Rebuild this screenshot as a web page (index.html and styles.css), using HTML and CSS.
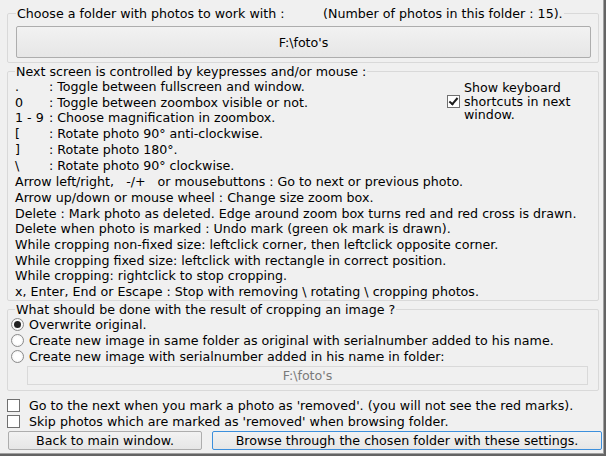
FILE: index.html
```html
<!DOCTYPE html>
<html lang="en">
<head>
  <meta charset="UTF-8" />
  <title>Crop photos</title>
  <link rel="stylesheet" href="styles.css">
</head>
<body>
  <div class="window">
    <fieldset class="group folder">
      <legend><span class="legend-main">Choose a folder with photos to work with :</span><span>(Number of photos in this folder : 15).</span></legend>
      <button class="btn folder-btn">F:\foto's</button>
    </fieldset>

    <fieldset class="group keys">
      <legend>Next screen is controlled by keypresses and/or mouse :</legend>
      <div class="keys-top">
        <div class="shortcuts">
          <div class="line"><span class="key">.</span>: Toggle between fullscreen and window.</div>
          <div class="line"><span class="key">0</span>: Toggle between zoombox visible or not.</div>
          <div class="line"><span class="key">1 - 9</span>: Choose magnification in zoombox.</div>
          <div class="line"><span class="key">[</span>: Rotate photo 90° anti-clockwise.</div>
          <div class="line"><span class="key">]</span>: Rotate photo 180°.</div>
          <div class="line"><span class="key">\</span>: Rotate photo 90° clockwise.</div>
        </div>
        <label class="show-keys">
          <input type="checkbox" class="check" checked>
          <span class="show-text">Show keyboard shortcuts in next window.</span>
        </label>
      </div>
      <div class="more">
        <div class="line">Arrow left/right,   -/+   or mousebuttons : Go to next or previous photo.</div>
        <div class="line">Arrow up/down or mouse wheel : Change size zoom box.</div>
        <div class="line">Delete : Mark photo as deleted. Edge around zoom box turns red and red cross is drawn.</div>
        <div class="line">Delete when photo is marked : Undo mark (green ok mark is drawn).</div>
        <div class="line">While cropping non-fixed size: leftclick corner, then leftclick opposite corner.</div>
        <div class="line">While cropping fixed size: leftclick with rectangle in correct position.</div>
        <div class="line">While cropping: rightclick to stop cropping.</div>
        <div class="line">x, Enter, End or Escape : Stop with removing \ rotating \ cropping photos.</div>
      </div>
    </fieldset>

    <fieldset class="group result">
      <legend>What should be done with the result of cropping an image ?</legend>
      <label class="option"><input type="radio" name="result" class="radio" checked>Overwrite original.</label>
      <label class="option"><input type="radio" name="result" class="radio">Create new image in same folder as original with serialnumber added to his name.</label>
      <label class="option"><input type="radio" name="result" class="radio">Create new image with serialnumber added in his name in folder:</label>
      <div class="target">F:\foto's</div>
    </fieldset>

    <div class="toggles">
      <label class="option plain"><input type="checkbox" class="check">Go to the next when you mark a photo as 'removed'. (you will not see the red marks).</label>
      <label class="option plain"><input type="checkbox" class="check">Skip photos which are marked as 'removed' when browsing folder.</label>
    </div>

    <div class="actions">
      <button class="btn back">Back to main window.</button>
      <button class="btn browse">Browse through the chosen folder with these settings.</button>
    </div>
  </div>
</body>
</html>
```

FILE: styles.css
```css
body {
  margin: 0;
  font-family: "DejaVu Sans", sans-serif;
  font-size: 12.65px;
  color: #000;
}
.window {
  width: 606px;
  height: 456px;
  box-sizing: border-box;
  background: #f0f0f0;
  padding: 6px 0 0 7px;
  box-shadow: inset -2px -2px #646464, inset -3px -3px #a0a0a0;
}
.group {
  width: 592px;
  box-sizing: border-box;
  margin: 0;
  padding: 0;
  border: 1px solid #d9d9d9;
  border-radius: 2px;
}
.group legend {
  padding: 0 1px;
  margin-left: 0;
  height: 15px;
  line-height: 15px;
}
.folder legend {
  display: flex;
}
.legend-main {
  width: 306px;
}
.folder {
  padding: 5px 7px 4px 8px;
}
.btn {
  font: inherit;
  color: #000;
  border: 1px solid #adadad;
  border-radius: 2px;
  background: linear-gradient(#f2f2f2, #e6e6e6);
  padding: 0;
}
.folder-btn {
  width: 575px;
  height: 32px;
  display: block;
}
.keys {
  margin-top: 1px;
  padding: 0 0 0 7px;
}
.line {
  line-height: 15.7px;
  white-space: pre;
}
.key {
  display: inline-block;
  min-width: 34px;
}
.keys-top {
  display: flex;
  align-items: flex-start;
}
.shortcuts {
  width: 432px;
}
.more {
  margin-top: 1px;
}
.show-keys {
  display: flex;
  align-items: center;
  gap: 4px;
  line-height: 13.5px;
  margin-top: 2px;
}
.show-text {
  width: 120px;
}
.check {
  appearance: none;
  width: 13px;
  height: 13px;
  margin: 0;
  flex: none;
  border: 1px solid #707070;
  background: #fff;
  box-sizing: border-box;
  position: relative;
}
.check:checked::after {
  content: "";
  position: absolute;
  left: 3px;
  top: 0px;
  width: 3px;
  height: 7px;
  border: solid #1c1c1c;
  border-width: 0 2px 2px 0;
  transform: rotate(40deg);
}
.result {
  margin-top: 1px;
  padding: 0 10px 5px 3px;
}
.result legend {
  margin-left: 4px;
}
.option {
  display: flex;
  align-items: center;
  gap: 5px;
  line-height: 16px;
  height: 16px;
  white-space: nowrap;
}
.radio {
  appearance: none;
  width: 13px;
  height: 13px;
  margin: 0;
  flex: none;
  border-radius: 50%;
  border: 1px solid #8a8a8a;
  background: radial-gradient(circle, #fff 40%, #e8e8e8);
  box-sizing: border-box;
  position: relative;
}
.radio:checked::after {
  content: "";
  position: absolute;
  left: 2px;
  top: 2px;
  width: 7px;
  height: 7px;
  border-radius: 50%;
  background: #222;
}
.target {
  margin: 1px 0 0 16px;
  height: 19px;
  box-sizing: border-box;
  border: 1px solid #d9d9d9;
  color: #7a7a7a;
  text-align: center;
  line-height: 17px;
}
.toggles {
  margin-top: 7px;
}
.plain {
  gap: 9px;
}
.actions {
  display: flex;
  gap: 10px;
  margin-top: 1px;
  padding-left: 1px;
}
.back {
  width: 194px;
  height: 19px;
}
.browse {
  width: 390px;
  height: 19px;
  border-color: #3c8fdc;
}
```
